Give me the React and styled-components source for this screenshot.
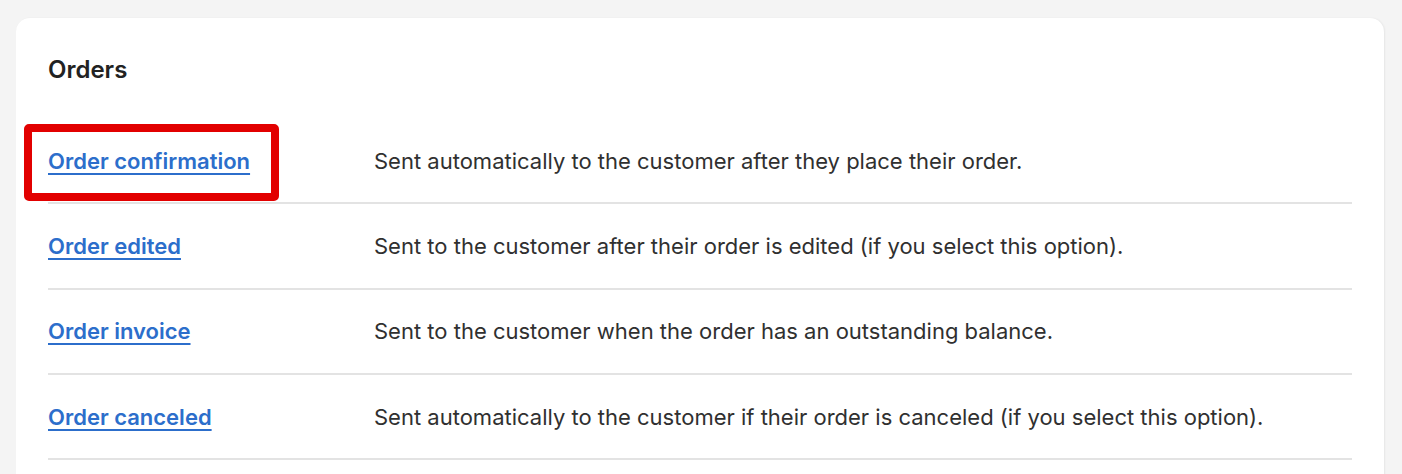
import React from "react";
import styled, { createGlobalStyle } from "styled-components";

const Global = createGlobalStyle`
  html, body { margin: 0; padding: 0; background: #f4f4f4; }
  body { font-family: Inter, "Noto Sans", sans-serif; -webkit-font-smoothing: antialiased; }
`;

const Page = styled.div`
  padding: 18px 18px 0 16px;
  height: 474px;
  box-sizing: border-box;
  overflow: hidden;
`;

const Card = styled.section`
  background: #ffffff;
  border-radius: 14px;
  box-shadow: 1px 0 2px rgba(0, 0, 0, 0.06), 0 1px 0 rgba(0, 0, 0, 0.04);
  padding: 37px 32px 40px 32px;
  min-height: 600px;
  box-sizing: border-box;
`;

const Title = styled.h2`
  margin: 0;
  font-size: 24px;
  line-height: 30px;
  font-weight: 600;
  color: #222222;
`;

const List = styled.div`
  margin-top: 34px;
  display: flex;
  flex-direction: column;
`;

const Row = styled.div`
  position: relative;
  display: grid;
  grid-template-columns: 326px 1fr;
  align-items: center;
  height: 85.33px;
  box-sizing: border-box;
  border-bottom: 2px solid #e3e3e3;
`;

const LinkText = styled.a`
  justify-self: start;
  font-size: 22px;
  font-weight: 600;
  color: #2c6ecb;
  text-decoration: underline;
  text-decoration-thickness: 2px;
  text-underline-offset: 4px;
  cursor: pointer;
`;

const Desc = styled.div`
  font-size: 22px;
  color: #303030;
`;

const Highlight = styled.div`
  position: absolute;
  left: -24px;
  top: 5px;
  width: 255px;
  height: 77px;
  border: 8px solid #e20000;
  border-radius: 5px;
  box-sizing: border-box;
  pointer-events: none;
`;

const rows = [
  { name: "Order confirmation", desc: "Sent automatically to the customer after they place their order.", highlight: true },
  { name: "Order edited", desc: "Sent to the customer after their order is edited (if you select this option)." },
  { name: "Order invoice", desc: "Sent to the customer when the order has an outstanding balance." },
  { name: "Order canceled", desc: "Sent automatically to the customer if their order is canceled (if you select this option)." },
];

export default function App() {
  return (
    <>
      <Global />
      <Page>
        <Card>
          <Title>Orders</Title>
          <List>
            {rows.map((r) => (
              <Row key={r.name}>
                <LinkText>{r.name}</LinkText>
                <Desc>{r.desc}</Desc>
                {r.highlight && <Highlight />}
              </Row>
            ))}
          </List>
        </Card>
      </Page>
    </>
  );
}
